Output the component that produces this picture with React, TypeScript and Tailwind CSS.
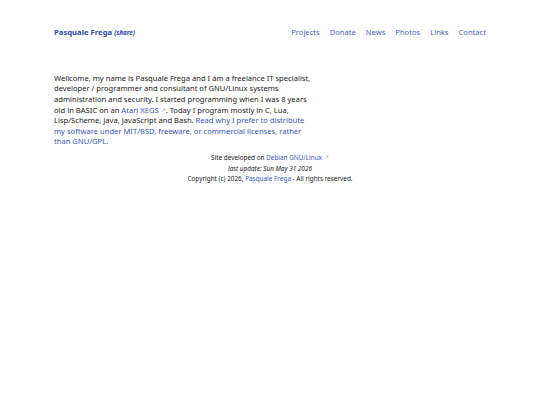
import React from "react";

const Ext = () => (
  <svg width="5" height="5" viewBox="0 0 10 10" className="inline-block ml-[2px] align-baseline" fill="none" stroke="#a3abc9" strokeWidth="1.2">
    <path d="M2 8 L8 2 M4.5 2 H8 V5.5" />
  </svg>
);

export default function App() {
  return (
    <div className="min-h-[405px] w-full bg-white text-[#222]" style={{ fontFamily: '"Noto Sans", "Open Sans", sans-serif' }}>
      <div className="mx-auto w-[432px] pt-[27px]">
        <header className="flex items-baseline justify-between">
          <div className="flex items-baseline gap-[2px]">
            <span className="text-[7.7px] font-bold text-[#3048b0]">Pasquale Frega</span>
            <span className="text-[6.3px] font-bold italic text-[#3048b0]">(share)</span>
          </div>
          <nav className="flex items-baseline gap-[10px] text-[7.6px] text-[#4a5fb8]">
            <span>Projects</span>
            <span>Donate</span>
            <span>News</span>
            <span>Photos</span>
            <span>Links</span>
            <span>Contact</span>
          </nav>
        </header>
        <p className="mt-[34px] w-[260px] text-[7.6px] leading-[10.65px]">
          Wellcome, my name is Pasquale Frega and I am a freelance IT specialist, developer / programmer and consultant of GNU/Linux systems administration and security. I started programming when I was 8 years old in BASIC on an <span className="text-[#3a55b8]">Atari XEGS</span><Ext />. Today I program mostly in C, Lua, Lisp/Scheme, Java, JavaScript and Bash. <span className="text-[#3a55b8]">Read why I prefer to distribute my software under MIT/BSD, freeware, or commercial licenses, rather than GNU/GPL.</span>
        </p>
        <footer className="mt-[6px] flex flex-col items-center text-[6.4px] leading-[10.5px] text-[#222]">
          <div>
            Site developed on <span className="text-[#3a55b8]">Debian GNU/Linux</span><Ext />
          </div>
          <div className="italic">last update: Sun May 31 2026</div>
          <div>
            Copyright (c) 2026, <span className="text-[#3a55b8]">Pasquale Frega</span> - All rights reserved.
          </div>
        </footer>
      </div>
    </div>
  );
}
